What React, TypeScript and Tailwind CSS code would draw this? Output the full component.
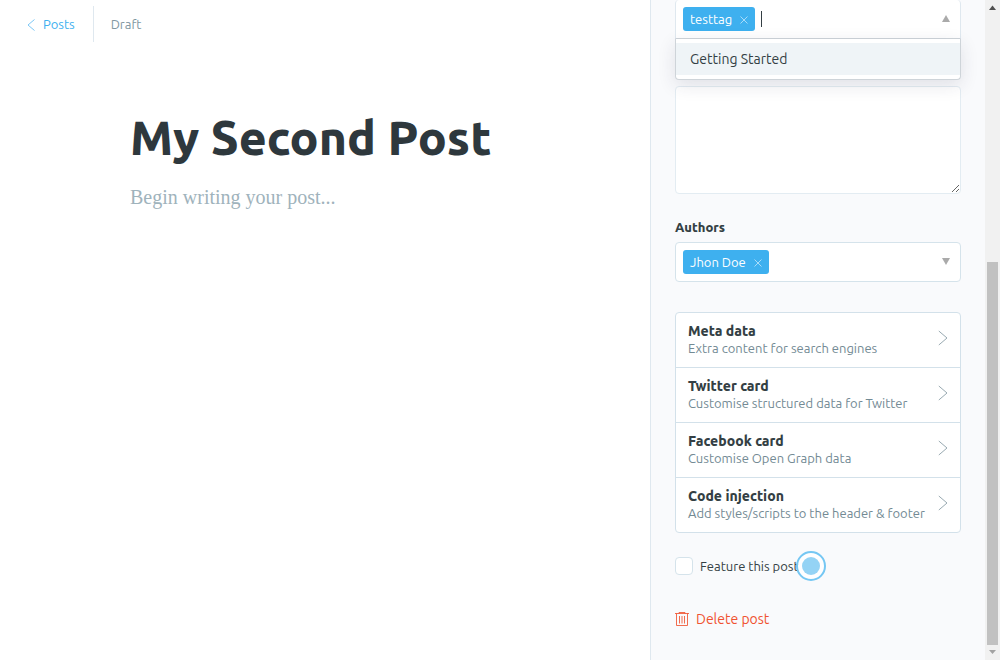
import type { ReactNode } from "react";

const settings = [
  { title: "Meta data", detail: "Extra content for search engines" },
  { title: "Twitter card", detail: "Customise structured data for Twitter" },
  { title: "Facebook card", detail: "Customise Open Graph data" },
  { title: "Code injection", detail: "Add styles/scripts to the header & footer" },
];

function Chevron({ left = false }: { left?: boolean }) {
  return left ? (
    <svg className="h-3 w-2" viewBox="0 0 8 12" fill="none" stroke="#7cc7f5" aria-hidden="true">
      <path d="M7.500 .5 1 6l6.500 5.500" />
    </svg>
  ) : (
    <svg className="mb-1 h-4 w-2.5 shrink-0" viewBox="0 0 10 16" fill="none" stroke="#98a9b1" aria-hidden="true">
      <path d="M.8 1 9 8 .8 15" />
    </svg>
  );
}

function Token({ children }: { children: string }) {
  return (
    <span className="flex h-6 items-center gap-2 rounded-[3px] bg-[#3eb0ef] px-[7px] pt-px text-[13px] text-white">
      {children}
      <button type="button" aria-label={`Remove ${children}`}>
        <svg className="size-2" viewBox="0 0 8 8" fill="none" stroke="#a7dbf9" aria-hidden="true">
          <path d="m.5 .5 7 7m0-7-7 7" />
        </svg>
      </button>
    </span>
  );
}

function Arrow({ up = false }: { up?: boolean }) {
  return (
    <svg className="mb-0.5 h-[7px] w-2" viewBox="0 0 8 7" fill="#aaaaaa" aria-hidden="true">
      <path d={up ? "M4 0 8 7H0Z" : "M0 0H8L4 7Z"} />
    </svg>
  );
}

function Toggle({ label, children }: { label: string; children: ReactNode }) {
  return (
    <button type="button" aria-label={label} className="flex h-6 items-center">
      {children}
    </button>
  );
}

function Scrollbar() {
  return (
    <div className="flex w-[15px] shrink-0 flex-col items-center bg-[#f1f1f1]" aria-hidden="true">
      <svg className="size-[15px]" viewBox="0 0 15 15" fill="#505050">
        <path d="M7.500 5.500 11 10H4Z" />
      </svg>
      <div className="grow-[247]" />
      <div className="w-[11px] grow-[383] bg-[#c1c1c1]" />
      <svg className="size-[15px]" viewBox="0 0 15 15" fill="#a3a3a3">
        <path d="M4 5H11L7.500 9Z" />
      </svg>
    </div>
  );
}

export default function App() {
  return (
    <div className="flex min-h-screen bg-white font-['Ubuntu','Noto_Sans',sans-serif] text-[#343f44]">
      <main className="min-w-0 flex-1">
        <header className="flex items-center pt-1.5 pl-[27px] text-[13px]">
          <a href="#posts" className="flex h-9 items-center gap-2 border-r border-[#dfe8ef] pt-px pr-[18px] text-[#3eb0ef]">
            <Chevron left />
            Posts
          </a>
          <span className="pt-px pl-[17px] text-[#8198a2]">Draft</span>
        </header>
        <article className="px-[130px] pt-16">
          <h1 className="text-[48px] leading-[62px] font-extrabold whitespace-nowrap text-[#2e383d]">My Second Post</h1>
          <p className="mt-[13px] font-['Liberation_Serif',serif] text-xl leading-8 whitespace-nowrap text-[#9fb3bc]">
            Begin writing your post...
          </p>
        </article>
      </main>

      <aside className="w-[335px] shrink-0 border-l border-[#dfe8ef] bg-[#f9fafc] px-6" aria-label="Post settings">
        <div className="relative">
          <div className="flex h-[39px] items-center gap-1.5 rounded-t border-x border-b border-[#dfe8ef] border-b-[#ced4d9] bg-white pr-2.5 pl-[7px]">
            <Token>testtag</Token>
            <input
              aria-label="Tags"
              className="h-4 min-w-0 flex-1 border-l border-[#343f44] text-[13px] outline-none"
            />
            <Toggle label="Close tag list">
              <Arrow up />
            </Toggle>
          </div>
          <ul className="absolute inset-x-0 top-[39px] z-10 rounded-b border border-t-0 border-[#ced4d9] bg-white py-1 shadow-[0_5px_18px_rgba(39,44,73,0.12)]">
            <li>
              <button type="button" className="block w-full bg-[#eff4f7] px-3.5 text-left text-sm leading-8">
                Getting Started
              </button>
            </li>
          </ul>
        </div>

        <textarea
          aria-label="Excerpt"
          className="mt-[47px] block h-[108px] w-full resize-y rounded border border-[#e3ecf2] bg-white p-2"
        />

        <div className="mt-6 text-[13px] leading-[18px] font-extrabold" id="authors-label">
          Authors
        </div>
        <div
          role="group"
          aria-labelledby="authors-label"
          className="mt-1.5 flex h-10 items-center justify-between rounded border border-[#d5e3eb] bg-white pr-2.5 pl-[7px]"
        >
          <Token>Jhon Doe</Token>
          <Toggle label="Open author list">
            <Arrow />
          </Toggle>
        </div>

        <ul className="mt-[30px] divide-y divide-[#d3e1ea] rounded border border-[#d3e1ea] bg-white">
          {settings.map(({ title, detail }) => (
            <li key={title}>
              <button type="button" className="flex h-[54px] w-full items-center justify-between px-3 text-left">
                <span className="flex flex-col whitespace-nowrap">
                  <b className="text-sm leading-[18px] font-extrabold">{title}</b>
                  <span className="pb-0.5 text-[13px] leading-4 text-[#738a94]">{detail}</span>
                </span>
                <Chevron />
              </button>
            </li>
          ))}
        </ul>

        <div className="mt-6 flex">
          <label className="relative flex items-center gap-[7px] pr-3 text-[13px] leading-[18px]">
            <input
              type="checkbox"
              className="size-[18px] appearance-none rounded border border-[#d5e3eb] bg-white checked:bg-[#3eb0ef]"
            />
            Feature this post
            <svg
              className="pointer-events-none absolute -top-[6px] left-[121px] size-[30px]"
              viewBox="0 0 30 30"
              fill="none"
              aria-hidden="true"
            >
              <circle cx="15" cy="15" r="11.500" stroke="#ffffff" strokeOpacity=".8" strokeWidth="5" />
              <circle cx="15" cy="15" r="14" stroke="#75c7f3" strokeWidth="2" />
              <circle cx="15" cy="15" r="9" fill="#94d3f5" />
            </svg>
          </label>
        </div>

        <button type="button" className="mt-[34px] flex items-center gap-[7px] text-sm leading-5 text-[#f05230]">
          <svg className="h-3.5 w-3.5" viewBox="0 0 14 14" fill="none" stroke="#f05230" aria-hidden="true">
            <path d="M0 1.500h14M4 1.500v-1h6v1M1.500 1.500v12h11v-12M4.500 4v7.500M7 4v7.500M9.500 4v7.500" strokeOpacity=".85" />
          </svg>
          Delete post
        </button>
      </aside>
      <Scrollbar />
    </div>
  );
}
